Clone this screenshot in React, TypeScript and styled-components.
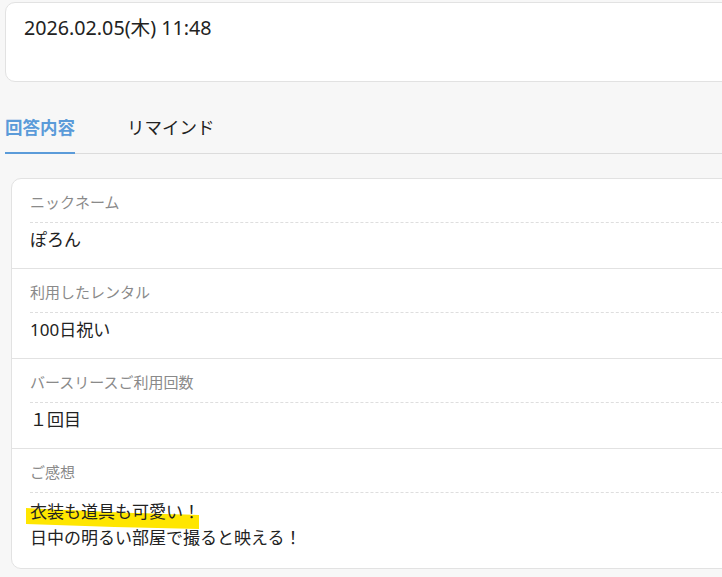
import styled, { createGlobalStyle } from "styled-components";

const GlobalStyle = createGlobalStyle`
  html, body {
    margin: 0;
    padding: 0;
    background: #f7f7f7;
    font-family: "Noto Sans", "Noto Sans CJK JP", sans-serif;
    color: #222;
    overflow: hidden;
  }
`;

const Page = styled.div`
  width: 760px;
  padding: 2px 0 0 5px;
`;

const DateCard = styled.div`
  height: 80px;
  box-sizing: border-box;
  background: #fff;
  border: 1px solid #e2e2e2;
  border-radius: 10px;
  padding: 12px 18px;
  font-size: 19.7px;
  line-height: 26px;
  color: #222;
`;

const Tabs = styled.div`
  display: flex;
  gap: 52px;
  margin-top: 25px;
  border-bottom: 1px solid #dcdcdc;
`;

const Tab = styled.div<{ $active?: boolean }>`
  padding: 8px 0 13px;
  font-size: 17.5px;
  line-height: 24px;
  font-weight: ${(p) => (p.$active ? 700 : 400)};
  color: ${(p) => (p.$active ? "#5b9bd9" : "#222")};
  border-bottom: 2px solid ${(p) => (p.$active ? "#5b9bd9" : "transparent")};
  margin-bottom: -1px;
`;

const AnswerCard = styled.div`
  margin: 24px 0 0 6px;
  background: #fff;
  border: 1px solid #e2e2e2;
  border-radius: 10px;
`;

const Row = styled.div`
  padding: 13px 0 15px 18px;
  & + & {
    border-top: 1px solid #e2e2e2;
  }
`;

const Label = styled.div`
  font-size: 15px;
  line-height: 20px;
  color: #8a8a8a;
  padding-bottom: 10px;
  border-bottom: 1px dashed #dedede;
`;

const Value = styled.div<{ $multi?: boolean }>`
  padding-top: ${(p) => (p.$multi ? 6 : 4)}px;
  padding-bottom: ${(p) => (p.$multi ? 2 : 0)}px;
  font-size: 17px;
  line-height: 26px;
  color: #222;
`;

const Marked = styled.span`
  position: relative;
  display: inline-block;
`;

const MarkerStroke = styled.svg`
  position: absolute;
  left: -5px;
  top: 9px;
  width: 180px;
  height: 26px;
  z-index: 0;
`;

const MarkedText = styled.span`
  position: relative;
  z-index: 1;
`;

const rows = [
  { label: "ニックネーム", value: "ぽろん" },
  { label: "利用したレンタル", value: "100日祝い" },
  { label: "バースリースご利用回数", value: "１回目" },
];

export default function App() {
  return (
    <>
      <GlobalStyle />
      <Page>
        <DateCard>2026.02.05(木) 11:48</DateCard>
        <Tabs>
          <Tab $active>回答内容</Tab>
          <Tab>リマインド</Tab>
        </Tabs>
        <AnswerCard>
          {rows.map((r) => (
            <Row key={r.label}>
              <Label>{r.label}</Label>
              <Value>{r.value}</Value>
            </Row>
          ))}
          <Row>
            <Label>ご感想</Label>
            <Value $multi>
              <Marked>
                <MarkerStroke viewBox="0 0 180 26">
                  <path
                    d="M1 0 C40 2 100 5 174 7 L174 21 C120 20 60 18 1 16 Z"
                    fill="#ffe600"
                  />
                </MarkerStroke>
                <MarkedText>衣装も道具も可愛い！</MarkedText>
              </Marked>
              <br />
              日中の明るい部屋で撮ると映える！
            </Value>
          </Row>
        </AnswerCard>
      </Page>
    </>
  );
}
